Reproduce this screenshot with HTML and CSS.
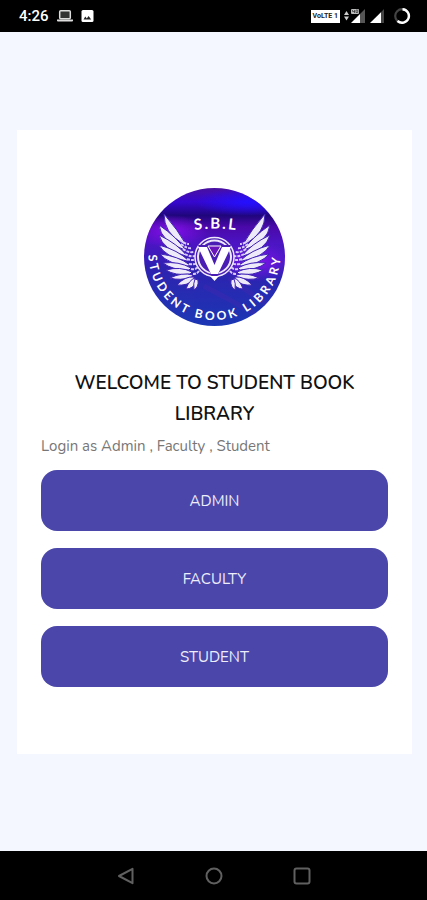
FILE: index.html
```html
<!DOCTYPE html>
<html lang="en">
<head>
  <meta charset="UTF-8">
  <meta name="viewport" content="width=device-width, initial-scale=1.0">
  <title>Student Book Library</title>
  <link rel="stylesheet" href="styles.css">
</head>
<body>
  <header class="status-bar">
    <div class="status-group">
      <span class="clock">4:26</span>
      <svg width="16" height="14" viewBox="0 0 16 14" aria-hidden="true">
        <rect x="2.7" y="1.7" width="10.6" height="8" rx="1" fill="#333" stroke="#ddd" stroke-width="1.5"/>
        <path d="M0 10.5h16v1.2q0 .8-1 .8H1q-1 0-1-.8z" fill="#ddd"/>
      </svg>
      <svg width="13" height="14" viewBox="0 0 13 14" aria-hidden="true">
        <rect x="0.5" y="1" width="12" height="12" rx="1.5" fill="#fff"/>
        <path d="M2.5 10.5l1.800-3 1.500 2 1.800-2.500 2.600 3.500z" fill="#222"/>
      </svg>
    </div>
    <div class="status-group status-right">
      <span class="volte">VoLTE 1</span>
      <svg width="22" height="16" viewBox="0 0 22 16" aria-hidden="true">
        <path d="M0 7l2.500-4 2.500 4zM0 8.500l2.500 4 2.500-4z" fill="#ccc"/>
        <path d="M21 1v14h-5V6z" fill="#555"/>
        <path d="M16 6v9H7z" fill="#fff"/>
        <rect x="7" y="1" width="8" height="5" rx="1" fill="#bbb"/>
        <path d="M8.500 2v1.500h2V5M10.500 2v2M12 2h1.800v2.500H12z" fill="none" stroke="#333" stroke-width=".7"/>
      </svg>
      <svg width="15" height="16" viewBox="0 0 15 16" aria-hidden="true">
        <path d="M14 1v14H1z" fill="#444"/>
        <path d="M11 4.300V15H0z" fill="#fff"/>
      </svg>
      <svg class="ring" width="18" height="18" viewBox="0 0 18 18" aria-hidden="true">
        <circle cx="9" cy="9" r="6.800" fill="none" stroke="#444" stroke-width="2.200"/>
        <path d="M9.500 2.200A6.800 6.800 0 1 1 4.500 14" fill="none" stroke="#fff" stroke-width="2.400"/>
      </svg>
    </div>
  </header>

  <main class="page">
    <section class="card">
      <svg class="logo" width="141" height="138" viewBox="0 0 141 138" role="img" aria-label="Student Book Library">
        <defs>
          <linearGradient id="sky" x1="0" y1="0" x2="0" y2="1">
            <stop offset="0" stop-color="#4a10a0"/>
            <stop offset=".1" stop-color="#3608d0"/>
            <stop offset=".2" stop-color="#20067c"/>
            <stop offset=".28" stop-color="#4a08a8"/>
            <stop offset=".4" stop-color="#4c14c4"/>
            <stop offset=".58" stop-color="#2e22b0"/>
            <stop offset="1" stop-color="#1c38b4"/>
          </linearGradient>
          <radialGradient id="glow">
            <stop offset="0" stop-color="#8a10f4" stop-opacity=".9"/>
            <stop offset="1" stop-color="#8a10f4" stop-opacity="0"/>
          </radialGradient>
          <radialGradient id="shine">
            <stop offset="0" stop-color="#2410ff"/>
            <stop offset="1" stop-color="#2410ff" stop-opacity="0"/>
          </radialGradient>
          <clipPath id="disc"><ellipse cx="70.500" cy="69" rx="70.500" ry="69"/></clipPath>
          <path id="top-arc" d="M46 43Q70.500 38 98 43"/>
          <path id="bottom-arc" d="M6.500 50A66 66 0 1 0 134.500 50"/>
          <g id="wing">
            <path d="M20 26Q20 45 38 55L43 58Q34 42 20 26z"/>
            <path d="M15 37Q17 54 41 62L43 64Q33 49 15 37z"/>
            <path d="M15 47Q19 62 42 68L44 69Q34 56 15 47z"/>
            <path d="M15 57Q21 69 43 73L45 73Q34 62 15 57z"/>
            <path d="M16 66Q24 76 44 78L46 77Q34 68 16 66z"/>
            <path d="M19 75Q28 82 45 82L47 80Q35 73 19 75z"/>
            <path d="M22 82Q31 88 46 86L48 84Q36 78 22 82z"/>
            <path d="M26 90Q36 93 48 89L49 87Q38 84 26 90z"/>
            <path d="M33 97Q43 98 50 92L50 89Q41 88 33 97z"/>
            <path d="M42 101Q49 101 52 94L51 90Q45 92 42 101z"/>
            <path d="M50 102Q55 99 54 92L51 91Q49 95 50 102z"/>
            <path d="M36 52q5 4 9 4M37 56q6 5 11 4M39 61q5 4 11 3M41 66q5 3 10 2M43 71q5 2 9 0M45 76q5 1 8-1M47 81q4 1 7-2M49 86q4 0 6-3" fill="none" stroke="#d9c8fa" stroke-width="2" stroke-dasharray="3 1"/>
          </g>
        </defs>
        <g clip-path="url(#disc)">
          <rect width="141" height="138" fill="url(#sky)"/>
          <ellipse cx="103" cy="14" rx="52" ry="14" fill="url(#shine)"/>
          <ellipse cx="26" cy="43" rx="38" ry="16" fill="url(#glow)"/>
          <ellipse cx="112" cy="74" rx="42" ry="20" fill="url(#glow)"/>
          <path d="M60 98L130 136M85 90L125 118" stroke="#4827b0" stroke-width="5" opacity=".35"/>
        </g>
        <g fill="#eeeafa" stroke="#3f22b4" stroke-width="1">
          <use href="#wing"/>
          <use href="#wing" transform="matrix(-1 0 0 1 141 0)"/>
        </g>
        <circle cx="70.500" cy="69" r="19.500" fill="#4a1eb4" stroke="#eee8fb" stroke-width="1.500"/>
        <circle cx="70.500" cy="69" r="16.500" fill="none" stroke="#eee8fb" stroke-width="2"/>
        <path d="M54 57H64L70.500 73L77 57H87L73 89H68z" fill="#4a1eb4"/>
        <path d="M54 59H63L70.500 77L78 59H87L74 86H67z" fill="#fff"/>
        <path d="M64 58H77L70.500 69z" fill="#6a14bc" stroke="#fff" stroke-width="1"/>
        <path d="M66 88h9l-4.500 5z" fill="#fff"/>
        <text class="logo-initials"><textPath href="#top-arc" startOffset="50%">S.B.L</textPath></text>
        <text class="logo-name"><textPath href="#bottom-arc" startOffset="50%">STUDENT BOOK LIBRARY</textPath></text>
      </svg>

      <h1 class="title">WELCOME TO STUDENT BOOK LIBRARY</h1>
      <p class="subtitle">Login as Admin , Faculty , Student</p>

      <div class="roles">
        <button type="button" class="role-btn">ADMIN</button>
        <button type="button" class="role-btn">FACULTY</button>
        <button type="button" class="role-btn">STUDENT</button>
      </div>
    </section>
  </main>

  <nav class="nav-bar" aria-label="System">
    <button type="button" class="nav-btn" aria-label="Back">
      <svg width="18" height="18" viewBox="0 0 18 18"><path d="M15.500 1.800v14.400L2 9z" fill="none" stroke="#606060" stroke-width="2" stroke-linejoin="round"/></svg>
    </button>
    <button type="button" class="nav-btn" aria-label="Home">
      <svg width="18" height="18" viewBox="0 0 18 18"><circle cx="9" cy="9" r="7.500" fill="none" stroke="#606060" stroke-width="2"/></svg>
    </button>
    <button type="button" class="nav-btn" aria-label="Recent apps">
      <svg width="18" height="18" viewBox="0 0 18 18"><rect x="1.500" y="1.500" width="15" height="15" rx="2" fill="none" stroke="#606060" stroke-width="2"/></svg>
    </button>
  </nav>
</body>
</html>
```

FILE: styles.css
```css
* { box-sizing: border-box; }

body {
  margin: 0;
  min-height: 100vh;
  display: flex;
  flex-direction: column;
  background: #f4f7ff;
  font-family: Nunito, Lato, sans-serif;
}

/* status bar */
.status-bar {
  display: flex;
  justify-content: space-between;
  align-items: center;
  height: 32px;
  padding: 0 16px 0 19px;
  background: #000;
  color: #fff;
}
.status-group { display: flex; align-items: center; gap: 8px; }
.status-right { gap: 4px; }
.clock { font: 500 15px Roboto, sans-serif; }
.volte {
  padding: 0 2px;
  background: #fff;
  color: #222;
  font: bold 7px/13px Roboto, sans-serif;
}
.ring { margin-left: 4px; }

/* content */
.page {
  flex: 1;
  display: flex;
  align-items: center;
  padding: 17px 15px 16px 17px;
}
.card {
  flex: 1;
  padding: 58px 24px 67px;
  background: #fff;
}
.logo { display: block; margin: 0 auto; }
.logo-initials,
.logo-name {
  fill: #fff;
  font-family: Lato, sans-serif;
  font-weight: 700;
  text-anchor: middle;
}
.logo-initials { font-size: 15px; letter-spacing: 2px; }
.logo-name { font-size: 12px; letter-spacing: 3px; }

.title {
  margin: 42px 0 0;
  color: #111;
  font-size: 19px;
  font-weight: 600;
  line-height: 31px;
  text-align: center;
}
.subtitle {
  margin: 0 0 8px;
  color: #777;
  font-size: 15px;
  line-height: 32px;
}

.roles { display: flex; flex-direction: column; gap: 17px; }
.role-btn {
  height: 61px;
  border: 0;
  border-radius: 16px;
  background: #4b47aa;
  color: #eeedfa;
  font-family: inherit;
  font-size: 15px;
  cursor: pointer;
}

/* system navigation */
.nav-bar {
  display: flex;
  justify-content: center;
  align-items: center;
  gap: 58px;
  height: 49px;
  background: #000;
}
.nav-btn {
  display: flex;
  padding: 6px;
  border: 0;
  background: none;
}
```
